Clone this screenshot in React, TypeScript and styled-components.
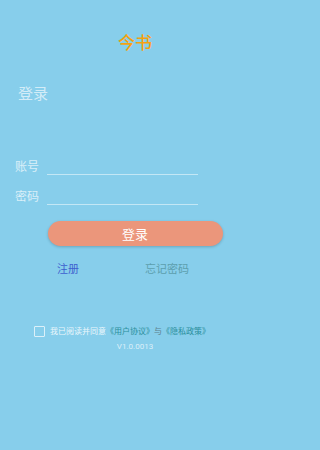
import styled, { createGlobalStyle } from 'styled-components'

const GlobalStyle = createGlobalStyle`
    html,
    body {
        margin: 0;
        padding: 0;
    }

    body {
        background: #87ceeb;
        font-family: Roboto, 'Noto Sans CJK SC', sans-serif;
    }

    * {
        box-sizing: border-box;
    }
`

const App = () => {
    return (
        <PageContainer>
            <GlobalStyle />
            <Title>今书</Title>
            <Heading>登录</Heading>
            <FormRow $top={52}>
                <Label>账号</Label>
                <Field type="text" />
            </FormRow>
            <FormRow $top={11}>
                <Label>密码</Label>
                <Field type="password" />
            </FormRow>
            <LoginButton>登录</LoginButton>
            <LinkRow>
                <LinkText $color="#3e5fcf">注册</LinkText>
                <LinkText $color="#5c9fae">忘记密码</LinkText>
            </LinkRow>
            <AgreementRow>
                <CheckBox />
                <AgreementText>
                    我已阅读并同意
                    <Highlight>《用户协议》</Highlight>
                    <Plain>与</Plain>
                    <Highlight>《隐私政策》</Highlight>
                </AgreementText>
            </AgreementRow>
            <Version>V1.0.0013</Version>
        </PageContainer>
    )
}

export default App

export const PageContainer = styled.div`
    display: flex;
    flex-direction: column;

    min-height: 100vh;
    width: 270px;

    background: #87ceeb;
`

export const Title = styled.h1`
    margin: 32px 0 0 0;

    font-size: 17px;
    line-height: 22px;
    font-weight: 500;
    text-align: center;

    color: #f5a20f;
`

export const Heading = styled.h2`
    margin: 30px 0 0 18px;

    font-size: 15px;
    line-height: 20px;
    font-weight: 400;

    color: rgba(255, 255, 255, 0.65);
`

export const FormRow = styled.div<{ $top: number }>`
    display: flex;
    align-items: flex-end;

    margin-top: ${({ $top }) => $top}px;
    padding-left: 15px;
`

export const Label = styled.span`
    width: 32px;

    font-size: 12px;
    line-height: 16px;

    color: rgba(255, 255, 255, 0.7);
`

export const Field = styled.input`
    width: 151px;
    height: 19px;
    padding: 0;

    border: none;
    border-bottom: 1px solid rgba(255, 255, 255, 0.5);
    background: transparent;
    outline: none;

    font-size: 12px;
    color: #fff;
`

export const LoginButton = styled.button`
    align-self: center;

    width: 175px;
    height: 25px;
    margin-top: 16px;
    padding: 0;

    border: none;
    border-radius: 13px;
    background: #eb967b;
    box-shadow: 0 1px 3px rgba(0, 0, 0, 0.2);

    font-family: 'Noto Sans CJK SC', sans-serif;
    font-size: 13px;
    color: #fff;
`

export const LinkRow = styled.div`
    display: flex;
    gap: 66px;

    margin-top: 16px;
    padding-left: 57px;
`

export const LinkText = styled.span<{ $color: string }>`
    font-size: 11px;
    line-height: 15px;

    color: ${({ $color }) => $color};
`

export const AgreementRow = styled.div`
    display: flex;
    align-items: center;
    gap: 5px;

    margin-top: 49px;
    padding-left: 34px;
`

export const CheckBox = styled.span`
    width: 11px;
    height: 11px;

    border: 1px solid rgba(255, 255, 255, 0.7);
    border-radius: 1px;
`

export const AgreementText = styled.span`
    font-size: 8px;
    line-height: 11px;
    white-space: nowrap;

    color: rgba(255, 255, 255, 0.85);
`

export const Highlight = styled.span`
    color: #2b8f9c;
`

export const Plain = styled.span`
    color: #5d7f8c;
`

export const Version = styled.div`
    margin-top: 4px;

    font-size: 8px;
    line-height: 11px;
    text-align: center;

    color: rgba(255, 255, 255, 0.7);
`
